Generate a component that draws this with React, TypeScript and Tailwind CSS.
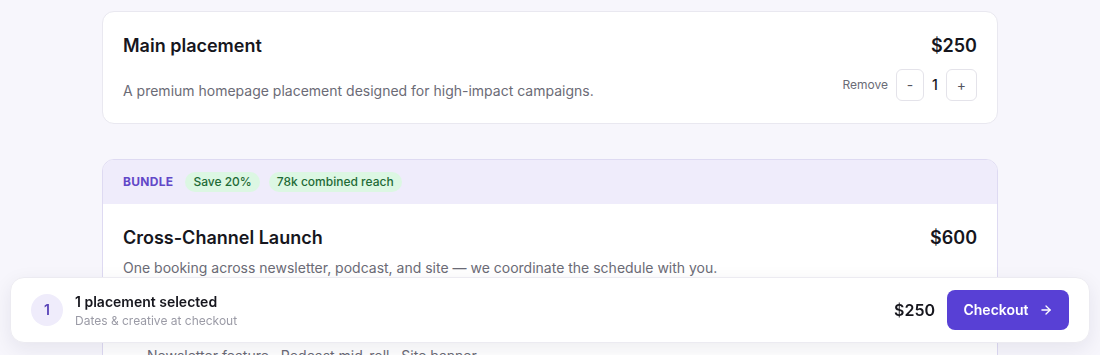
import { ArrowRight } from "lucide-react";

const App = () => {
  return (
    <div className="min-h-screen bg-[#f7f6fc] font-['Inter',sans-serif] text-[#16161d]">
      <div className="mx-auto w-[896px] pt-[11px] pb-40">
        {/* single placement */}
        <div className="flex justify-between rounded-xl border border-[#e9e8f0] bg-white px-5 pt-5 pb-[22px]">
          <div className="flex flex-col justify-between">
            <h2 className="text-lg leading-7 font-semibold">Main placement</h2>
            <p className="text-sm leading-5 text-[#6b6b76]">A premium homepage placement designed for high-impact campaigns.</p>
          </div>
          <div className="flex flex-col items-end">
            <p className="text-lg leading-7 font-semibold">$250</p>
            <div className="mt-[9px] flex items-center">
              <button className="mr-2 text-xs text-[#6b6b76]">Remove</button>
              <button className="flex h-8 w-7 items-center justify-center rounded-md border border-[#e4e3ea] text-sm text-[#55555f]">-</button>
              <span className="w-[22px] text-center text-sm font-medium">1</span>
              <button className="flex h-8 w-[31px] items-center justify-center rounded-md border border-[#e4e3ea] text-sm text-[#55555f]">+</button>
            </div>
          </div>
        </div>

        {/* bundle */}
        <div className="mt-[35px] overflow-hidden rounded-xl border border-[#dedaf2] bg-white">
          <div className="flex h-11 items-center gap-3 bg-[#efecfb] px-5">
            <span className="text-xs font-bold tracking-wide text-[#6248c8]">BUNDLE</span>
            <div className="flex gap-[9px]">
              <span className="rounded-full bg-[#dcf7e3] px-2 py-0.5 text-xs font-medium text-[#1f6b37]">Save 20%</span>
              <span className="rounded-full bg-[#dcf7e3] px-2 py-0.5 text-xs font-medium text-[#1f6b37]">78k combined reach</span>
            </div>
          </div>
          <div className="px-5 pt-5 pb-6">
            <div className="flex justify-between">
              <h2 className="text-lg leading-7 font-semibold">Cross-Channel Launch</h2>
              <p className="text-lg leading-7 font-semibold">$600</p>
            </div>
            <p className="mt-1.5 text-sm leading-5 text-[#6b6b76]">One booking across newsletter, podcast, and site — we coordinate the schedule with you.</p>
            <ul className="mt-[68px] space-y-2 pl-6 text-sm leading-5 text-[#6b6b76]">
              <li>Newsletter feature · Podcast mid-roll · Site banner</li>
              <li>Dates aligned across all three channels</li>
            </ul>
          </div>
        </div>
      </div>

      {/* checkout bar */}
      <div className="fixed right-2.5 bottom-3 left-2.5 flex items-center justify-between rounded-[14px] border border-[#ecebf1] bg-white py-[12px] pr-5 pl-5 shadow-[0_6px_20px_rgba(30,20,70,0.08)]">
        <div className="flex items-center gap-3">
          <div className="flex h-8 w-8 items-center justify-center rounded-full bg-[#efecfb] text-sm font-semibold text-[#5a45b8]">1</div>
          <div className="leading-tight">
            <p className="text-sm font-semibold">1 placement selected</p>
            <p className="mt-[1px] text-xs text-[#9b9ba6]">Dates &amp; creative at checkout</p>
          </div>
        </div>
        <div className="flex items-center gap-3">
          <span className="text-base font-semibold">$250</span>
          <button className="flex h-10 w-[122px] items-center justify-center gap-2.5 rounded-lg bg-[#5840d5] text-sm font-semibold text-white">
            Checkout
            <ArrowRight className="h-3.5 w-3.5" strokeWidth={2.25} />
          </button>
        </div>
      </div>
    </div>
  );
};

export default App;
